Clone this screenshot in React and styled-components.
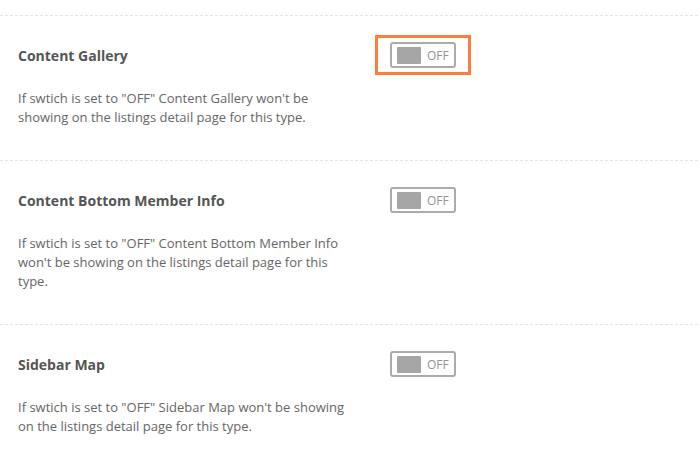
import React from 'react';
import styled, { createGlobalStyle } from 'styled-components';

const GlobalStyle = createGlobalStyle`
  * { box-sizing: border-box; }
  body {
    margin: 0;
    background: #ffffff;
    font-family: "Open Sans", "Liberation Sans", sans-serif;
  }
`;

const settings = [
  {
    title: 'Content Gallery',
    text: 'If swtich is set to "OFF" Content Gallery won\'t be showing on the listings detail page for this type.',
    highlighted: true,
  },
  {
    title: 'Content Bottom Member Info',
    text: 'If swtich is set to "OFF" Content Bottom Member Info won\'t be showing on the listings detail page for this type.',
  },
  {
    title: 'Sidebar Map',
    text: 'If swtich is set to "OFF" Sidebar Map won\'t be showing on the listings detail page for this type.',
  },
];

const App = () => {
  return (
    <Page>
      <GlobalStyle />
      {settings.map((item) => (
        <Section key={item.title}>
          <Row>
            <Title>{item.title}</Title>
            <Toggle $highlighted={item.highlighted}>
              <Knob />
              <ToggleLabel>OFF</ToggleLabel>
            </Toggle>
          </Row>
          <Description>{item.text}</Description>
        </Section>
      ))}
    </Page>
  );
};

export default App;

const Page = styled.div`
  width: 700px;
  height: 449px;
  overflow: hidden;
  padding-top: 15px;
`;

const Section = styled.div`
  border-top: 1px dashed #e4e4e4;
  margin-right: 2px;
  padding: 26px 0 33px 18px;
`;

const Row = styled.div`
  display: flex;
  align-items: center;
  height: 26px;
`;

const Title = styled.h3`
  margin: 0;
  width: 372px;
  font-size: 14px;
  font-weight: 700;
  color: #555555;
`;

const Toggle = styled.div`
  position: relative;
  display: flex;
  align-items: center;
  width: 66px;
  height: 26px;
  padding: 0 5px;
  border: 2px solid #ababab;
  border-radius: 3px;
  background: #ffffff;

  &::after {
    content: '';
    display: ${(p) => (p.$highlighted ? 'block' : 'none')};
    position: absolute;
    top: -9px;
    bottom: -9px;
    left: -17px;
    right: -17px;
    border: 3px solid #ff7e3d;
  }
`;

const Knob = styled.span`
  width: 24px;
  height: 17px;
  background: #a6a6a6;
  border-radius: 1px;
`;

const ToggleLabel = styled.span`
  margin-left: 6px;
  font-size: 12px;
  color: #939393;
`;

const Description = styled.p`
  margin: 21px 0 0;
  max-width: 335px;
  font-size: 13px;
  line-height: 19px;
  color: #666666;
`;
